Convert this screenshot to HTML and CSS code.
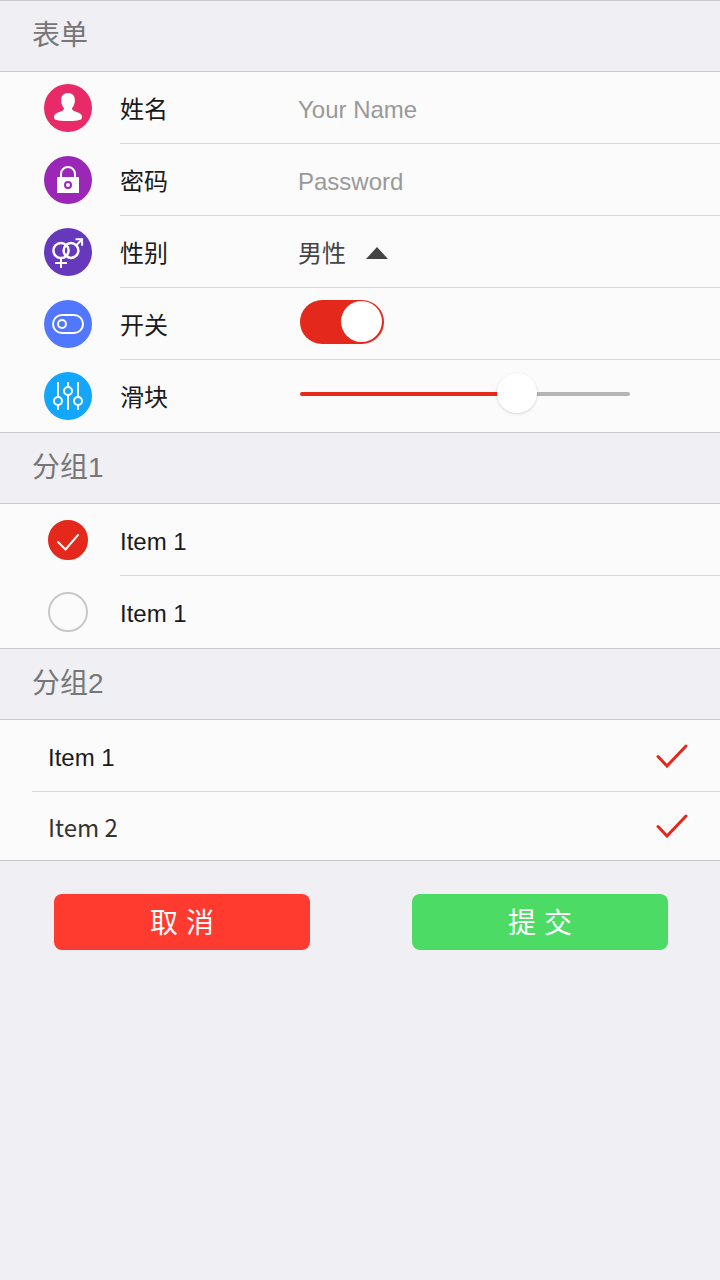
FILE: index.html
```html
<!DOCTYPE html>
<html lang="zh-CN">
<head>
<meta charset="utf-8">
<meta name="viewport" content="width=device-width, initial-scale=1">
<title>表单</title>
<link rel="stylesheet" href="styles.css">
</head>
<body>
<form class="form">
  <section>
    <h2 class="heading">表单</h2>
    <div class="row">
      <svg class="icon" viewBox="0 0 48 48" aria-hidden="true">
        <circle cx="24" cy="24" r="24" fill="#e82a68"/>
        <path fill="#fff" d="M24 9c4.500 0 6.900 3 6.900 7.200 0 3.400-1.200 6.300-2.900 7.900 0 2.200 1.500 3 4 3.600 4 1 6 2.700 6 5.400 0 1.300-.6 2.300-1.500 2.700-2.300 1-6.800 1.200-12.500 1.200s-10.200-.2-12.500-1.200c-.9-.4-1.500-1.400-1.500-2.700 0-2.700 2-4.400 6-5.400 2.500-.6 4-1.400 4-3.600-1.700-1.600-2.900-4.500-2.900-7.900 0-4.200 2.400-7.200 6.900-7.200z"/>
      </svg>
      <div class="field">
        <label class="name" for="username">姓名</label>
        <input class="text" id="username" type="text" placeholder="Your Name">
      </div>
    </div>
    <div class="row">
      <svg class="icon" viewBox="0 0 48 48" aria-hidden="true">
        <circle cx="24" cy="24" r="24" fill="#9a27b5"/>
        <path d="M17 22v-4a7 7 0 0 1 14 0v4" fill="none" stroke="#fff" stroke-width="2"/>
        <path d="M13 21h22v16H13z" fill="#fff"/>
        <circle cx="24" cy="29" r="3" fill="none" stroke="#9a27b5" stroke-width="2"/>
      </svg>
      <div class="field">
        <label class="name" for="password">密码</label>
        <input class="text" id="password" type="password" placeholder="Password">
      </div>
    </div>
    <div class="row">
      <svg class="icon" viewBox="0 0 48 48" aria-hidden="true">
        <circle cx="24" cy="24" r="24" fill="#6538bc"/>
        <g fill="none" stroke="#fff" stroke-width="2.500">
          <circle cx="17" cy="22.500" r="7.600"/>
          <circle cx="27" cy="22.500" r="7.400"/>
          <path d="M17 30v10M11 35h12M32.300 17.200l5.700-5.700" stroke-width="2"/>
          <path d="M31.500 11.300h6.600v6.500" stroke-width="2"/>
        </g>
      </svg>
      <div class="field">
        <label class="name" for="gender">性别</label>
        <span class="picker">
          <select class="select" id="gender"><option>男性</option><option>女性</option></select>
          <svg class="arrow" viewBox="0 0 22 12" aria-hidden="true"><path d="M11 0l11 12H0z" fill="#444"/></svg>
        </span>
      </div>
    </div>
    <div class="row">
      <svg class="icon" viewBox="0 0 48 48" aria-hidden="true">
        <circle cx="24" cy="24" r="24" fill="#5177ff"/>
        <g fill="none" stroke="#fff" stroke-width="2">
          <rect x="9" y="15" width="30" height="18" rx="9"/>
          <circle cx="18" cy="24" r="4"/>
        </g>
      </svg>
      <div class="field">
        <label class="name" for="toggle">开关</label>
        <span class="widget"><input class="switch" id="toggle" type="checkbox" role="switch" checked></span>
      </div>
    </div>
    <div class="row">
      <svg class="icon" viewBox="0 0 48 48" aria-hidden="true">
        <circle cx="24" cy="24" r="24" fill="#12a6ff"/>
        <g fill="none" stroke="#fff" stroke-width="2">
          <path d="M14 10v15M14 33v5M24 10v5M24 23v15M34 10v15M34 33v5"/>
          <circle cx="14" cy="29" r="4"/>
          <circle cx="24" cy="19" r="4"/>
          <circle cx="34" cy="29" r="4"/>
        </g>
      </svg>
      <div class="field">
        <label class="name" for="amount">滑块</label>
        <span class="widget"><input class="slider" id="amount" type="range" min="0" max="100" value="68"></span>
      </div>
    </div>
  </section>

  <section>
    <h2 class="heading">分组1</h2>
    <div class="row">
      <span class="round">
        <input class="round-box" id="a1" type="checkbox" checked>
        <svg class="mark" viewBox="0 0 40 40" aria-hidden="true"><path d="M10 22l7.500 7.500L30 15" fill="none" stroke="#fff" stroke-width="2" stroke-linecap="round"/></svg>
      </span>
      <div class="field"><label class="name" for="a1">Item 1</label></div>
    </div>
    <div class="row">
      <span class="round">
        <input class="round-box" id="a2" type="checkbox">
        <svg class="mark" viewBox="0 0 40 40" aria-hidden="true"><path d="M10 22l7.500 7.500L30 15" fill="none" stroke="#fff" stroke-width="2" stroke-linecap="round"/></svg>
      </span>
      <div class="field"><label class="name" for="a2">Item 1</label></div>
    </div>
  </section>

  <section class="plain">
    <h2 class="heading">分组2</h2>
    <div class="choice">
      <label class="name" for="b1">Item 1</label>
      <span class="tick">
        <input class="tick-box" id="b1" type="checkbox" checked>
        <svg class="mark" viewBox="0 0 32 24" aria-hidden="true"><path d="M2 12.500L11 22 30 2" fill="none" stroke="#e4281b" stroke-width="3" stroke-linecap="round"/></svg>
      </span>
    </div>
    <div class="choice last">
      <label class="name alt" for="b2">Item 2</label>
      <span class="tick">
        <input class="tick-box" id="b2" type="checkbox" checked>
        <svg class="mark" viewBox="0 0 32 24" aria-hidden="true"><path d="M2 12.500L11 22 30 2" fill="none" stroke="#e4281b" stroke-width="3" stroke-linecap="round"/></svg>
      </span>
    </div>
  </section>

  <div class="actions">
    <button class="button cancel" type="reset">取 消</button>
    <button class="button submit" type="submit">提 交</button>
  </div>
</form>
</body>
</html>
```
FILE: styles.css
```css
* {
  box-sizing: border-box;
}

body {
  margin: 0;
  background: #efeff4;
  color: #1a1a1a;
  font: 24px/36px "Liberation Sans", "Noto Sans CJK SC", sans-serif;
}

section {
  background: #fbfbfb;
}

.heading {
  margin: 0;
  padding: 17px 32px;
  border-top: 1px solid #c8c7cc;
  border-bottom: 1px solid #c8c7cc;
  background: #efeff4;
  color: #777;
  font-size: 28px;
  font-weight: 400;
  line-height: 36px;
}

.row {
  display: grid;
  grid-template-columns: 120px 1fr;
}

.icon {
  width: 48px;
  height: 48px;
  margin: 12px 0 12px 44px;
}

.field {
  display: grid;
  grid-template-columns: 178px 1fr;
  align-items: center;
  min-height: 72px;
  border-bottom: 1px solid #d9d9db;
}

.row:last-child .field {
  border-bottom-color: transparent;
}

.name {
  padding-top: 4px;
}

.text {
  width: 100%;
  height: 40px;
  padding: 4px 0 0;
  border: 0;
  outline: 0;
  background: none;
  color: #444;
  font: inherit;
}

.text::placeholder {
  color: #999;
  opacity: 1;
}

.picker {
  display: grid;
  grid-template-columns: 90px;
  align-items: center;
}

.select {
  grid-area: 1 / 1;
  height: 40px;
  padding: 4px 0 0;
  border: 0;
  outline: 0;
  appearance: none;
  background: none;
  color: #444;
  font: inherit;
}

.arrow {
  grid-area: 1 / 1;
  justify-self: end;
  width: 22px;
  height: 12px;
  margin-top: 3px;
  pointer-events: none;
}

.widget {
  display: flex;
  padding: 0 90px 4px 2px;
}

.switch {
  display: flex;
  justify-content: flex-start;
  align-items: center;
  width: 84px;
  height: 44px;
  margin: 0;
  padding: 0 2px;
  border-radius: 22px;
  appearance: none;
  background: #b5b5b5;
}

.switch::before {
  content: "";
  width: 41px;
  height: 41px;
  border-radius: 50%;
  background: #fff;
}

.switch:checked {
  justify-content: flex-end;
  background: #e4281b;
}

.slider {
  width: 100%;
  height: 40px;
  margin: 0;
  appearance: none;
  background: none;
}

.slider::-webkit-slider-runnable-track {
  height: 4px;
  border-radius: 2px;
  background: linear-gradient(to right, #e8281b 66%, #b5b5b5 66%);
}

.slider::-webkit-slider-thumb {
  width: 40px;
  height: 40px;
  margin-top: -19px;
  border-radius: 50%;
  appearance: none;
  background: #fff;
  box-shadow: 0 1px 3px rgba(0, 0, 0, 0.16);
}

.round {
  display: grid;
  align-self: center;
  width: 40px;
  margin-left: 48px;
}

.round-box,
.tick-box,
.mark {
  grid-area: 1 / 1;
  margin: 0;
}

.round-box {
  width: 40px;
  height: 40px;
  border: 2px solid #c8c8c8;
  border-radius: 50%;
  appearance: none;
}

.round-box:checked {
  border-color: #e4281b;
  background: #e4281b;
}

.mark {
  width: 100%;
  visibility: hidden;
  pointer-events: none;
}

:checked + .mark {
  visibility: visible;
}

.plain {
  border-bottom: 1px solid #c8c7cc;
}

.choice {
  display: flex;
  justify-content: space-between;
  align-items: center;
  min-height: 72px;
  margin-left: 32px;
  padding: 0 32px 0 16px;
  border-bottom: 1px solid #d9d9db;
}

.choice.last {
  min-height: 68px;
  border-bottom: 0;
}

.alt {
  padding-top: 2px;
  color: #333;
  font-family: "Noto Sans CJK SC", sans-serif;
}

.tick {
  display: grid;
  width: 32px;
}

.tick-box {
  width: 32px;
  height: 24px;
  appearance: none;
}

.actions {
  display: grid;
  grid-template-columns: 1fr 1fr;
  gap: 102px;
  padding: 33px 52px 33px 54px;
}

.button {
  height: 56px;
  padding: 4px 0 0;
  border: 0;
  border-radius: 8px;
  color: #fff;
  font: inherit;
  font-size: 28px;
}

.cancel {
  background: #ff3b30;
}

.submit {
  background: #4cdb64;
}
```
